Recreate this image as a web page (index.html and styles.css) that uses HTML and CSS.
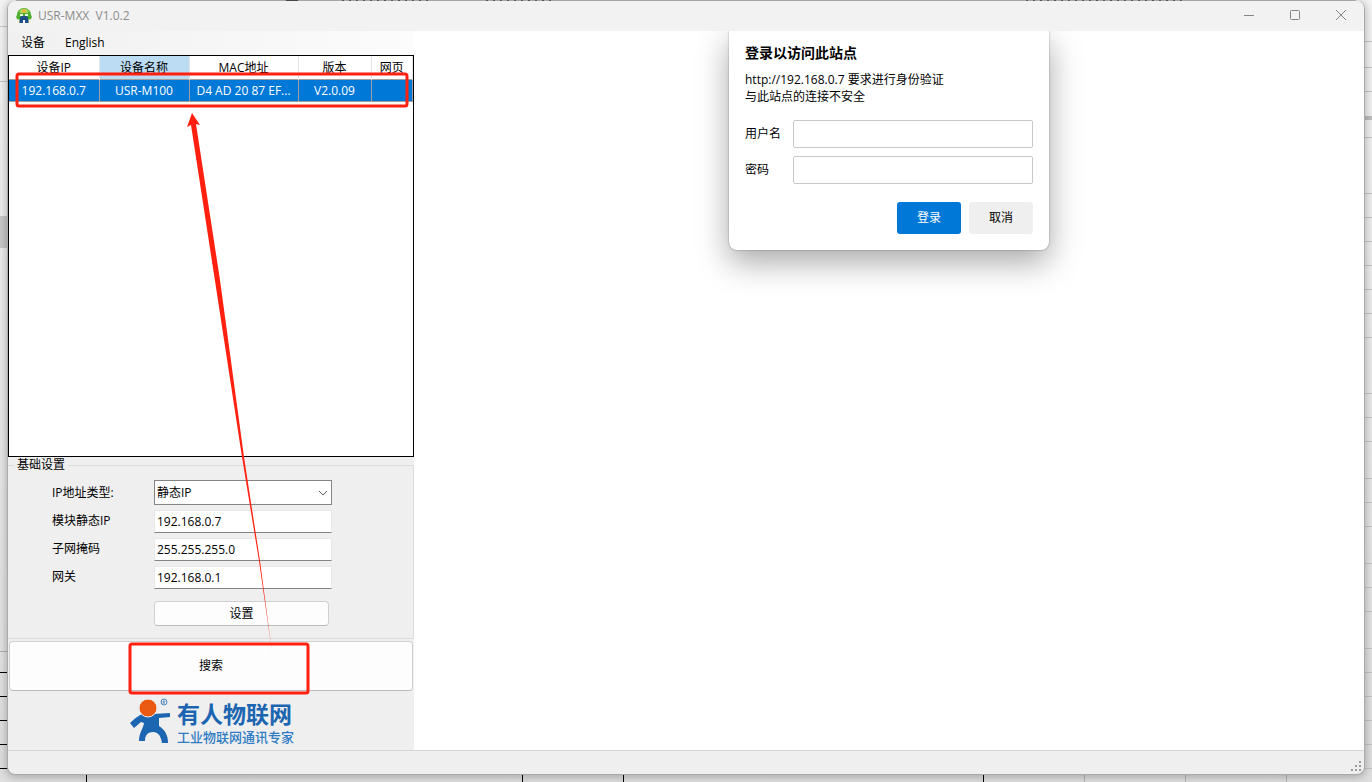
FILE: index.html
```html
<!DOCTYPE html>
<html lang="zh-CN">
<head>
    <meta charset="UTF-8">
    <title>USR-MXX V1.0.2</title>
    <link rel="stylesheet" href="styles.css">
</head>
<body>
    <div class="window">
        <header class="titlebar">
            <svg class="app-icon" viewBox="0 0 16 16">
                <path d="M8 0c4 0 7 3 7 7 1 1 1 3 0 4l-3 1H4l-3-1c-1-1-1-3 0-4 0-4 3-7 7-7z" fill="#4fae2c"/>
                <path d="M3 4a5.500 5.500 0 0 1 10 0l-2 1H5z" fill="#a8d95c"/>
                <circle cx="8" cy="3" r="2" fill="#e8b53c"/>
                <path d="M4 6h3v2H4zM9 6h3v2H9z" fill="#e6f5e0"/>
                <path d="M4 9l2-1h4l2 1v6H9v-3H7v3H4z" fill="#1d4f86"/>
                <path d="M3 12h1v3H3zM12 12h1v3h-1z" fill="#7f8f9c"/>
            </svg>
            <h1 class="title">USR-MXX&nbsp; V1.0.2</h1>
            <div class="controls">
                <button class="control" aria-label="Minimize">
                    <svg viewBox="0 0 10 10"><path d="M0 5.5h10"/></svg>
                </button>
                <button class="control" aria-label="Maximize">
                    <svg viewBox="0 0 10 10"><rect x=".5" y=".5" width="9" height="9" rx="1"/></svg>
                </button>
                <button class="control" aria-label="Close">
                    <svg viewBox="0 0 10 10"><path d="M0 0l10 10M10 0L0 10"/></svg>
                </button>
            </div>
        </header>

        <div class="main">
            <div class="sidebar">
                <nav class="menu">
                    <button>设备</button>
                    <button>English</button>
                </nav>

                <div class="device-list">
                    <table>
                        <colgroup>
                            <col class="col-ip">
                            <col class="col-name">
                            <col class="col-mac">
                            <col class="col-version">
                            <col class="col-web">
                        </colgroup>
                        <thead>
                            <tr>
                                <th>设备IP</th>
                                <th class="sorted">设备名称</th>
                                <th>MAC地址</th>
                                <th>版本</th>
                                <th>网页</th>
                            </tr>
                        </thead>
                        <tbody>
                            <tr>
                                <td>192.168.0.7</td>
                                <td>USR-M100</td>
                                <td>D4 AD 20 87 EF...</td>
                                <td>V2.0.09</td>
                                <td></td>
                            </tr>
                        </tbody>
                    </table>
                </div>

                <fieldset class="settings">
                    <legend>基础设置</legend>
                    <div class="form">
                        <label for="ip-type">IP地址类型:</label>
                        <div class="select-box">
                            <select id="ip-type">
                                <option>静态IP</option>
                            </select>
                            <svg class="chevron" viewBox="0 0 10 6"><path d="M1 1l4 4 4-4"/></svg>
                        </div>
                        <label for="static-ip">模块静态IP</label>
                        <input id="static-ip" type="text" value="192.168.0.7">
                        <label for="mask">子网掩码</label>
                        <input id="mask" type="text" value="255.255.255.0">
                        <label for="gateway">网关</label>
                        <input id="gateway" type="text" value="192.168.0.1">
                        <button class="btn set-btn">设置</button>
                    </div>
                </fieldset>

                <button class="btn search-btn">搜索</button>

                <div class="brand">
                    <svg class="brand-mark" viewBox="0 0 40 46">
                        <path d="M12 16C8 18 4 21 0 25l4 5 7-6 3 1c-1 6-5 10-5 18h6c0-6 3-9 8-9 6 0 8 5 9 11h6c0-8-3-13-9-17v-8l11-1v-4l-17 1z" fill="#1b65b1"/>
                        <circle cx="18" cy="10" r="9" fill="#ea5a13" stroke="#efefef"/>
                        <circle cx="34" cy="4" r="3" fill="none" stroke="#4a86c2"/>
                        <path d="M33 6V3h2v1h-2l2 2" fill="none" stroke="#4a86c2" stroke-width=".7"/>
                    </svg>
                    <div class="brand-text">
                        <div class="brand-name">有人物联网</div>
                        <div class="brand-slogan">工业物联网通讯专家</div>
                    </div>
                </div>

                <svg class="marks" viewBox="0 0 406 720">
                    <rect x="9" y="43" width="390" height="32" rx="2"/>
                    <rect x="122" y="613" width="178" height="49" rx="2"/>
                    <path class="arrow" d="M184 82l8 12-4-1 24 156 24 177 16 104 12 91-13-91-17-104-27-176-24-156-4 2z"/>
                </svg>
            </div>

            <main class="browser">
                <form class="login">
                    <h2>登录以访问此站点</h2>
                    <p>http://192.168.0.7 要求进行身份验证<br>与此站点的连接不安全</p>
                    <div class="login-row">
                        <label for="user">用户名</label>
                        <input id="user" type="text">
                    </div>
                    <div class="login-row">
                        <label for="password">密码</label>
                        <input id="password" type="password">
                    </div>
                    <div class="login-actions">
                        <button type="button" class="primary">登录</button>
                        <button type="button">取消</button>
                    </div>
                </form>
            </main>
        </div>

        <footer class="statusbar">
            <svg class="grip" viewBox="0 0 10 10">
                <path d="M8 0h2v2H8zM4 4h2v2H4zM8 4h2v2H8zM0 8h2v2H0zM4 8h2v2H4zM8 8h2v2H8z"/>
            </svg>
        </footer>
    </div>
</body>
</html>
```
FILE: styles.css
```css
:root {
    --panel: #efefef;
    --blue: #0078d7;
    --mark: #ff2010;
    --line: #d5d5d5;
    --rows: repeating-linear-gradient(#c4c4c8 0 1px, transparent 1px 24px);
}

* {
    box-sizing: border-box;
}

body {
    margin: 0;
    height: 100vh;
    padding: 1px 7px 7px;
    display: flex;
    font-family: "Open Sans", "Noto Sans CJK SC", sans-serif;
    font-size: 12px;
    line-height: 16px;
    color: #000;
    /* sheet behind the window: left, right, bottom and top edges */
    background:
        linear-gradient(#c8c8c8, #c8c8c8) 0 216px / 8px 32px no-repeat,
        linear-gradient(#c8c8c8, #c8c8c8) 0 26px / 8px 1px no-repeat,
        linear-gradient(#c8c8c8, #c8c8c8) 0 81px / 8px 1px no-repeat,
        linear-gradient(#b0b0b0, #b0b0b0) 0 651px / 8px 1px no-repeat,
        repeating-linear-gradient(#000 0 1px, transparent 1px 24px) 0 672px / 8px 110px no-repeat,
        linear-gradient(#bdbdbd, #bdbdbd) 100% 116px / 8px 4px no-repeat,
        linear-gradient(#c4c4c8, #c4c4c8) 100% 41px / 8px 1px no-repeat,
        var(--rows) 100% 67px / 8px 25px no-repeat,
        linear-gradient(#c4c4c8, #c4c4c8) 100% 137px / 8px 1px no-repeat,
        var(--rows) 100% 193px / 8px 145px no-repeat,
        var(--rows) 100% 393px / 8px 49px no-repeat,
        var(--rows) 100% 478px / 8px 49px no-repeat,
        var(--rows) 100% 563px / 8px 49px no-repeat,
        var(--rows) 100% 648px / 8px 121px no-repeat,
        linear-gradient(#000, #000) 86px 100% / 1px 8px no-repeat,
        linear-gradient(#000, #000) 522px 100% / 1px 8px no-repeat,
        linear-gradient(#000, #000) 623px 100% / 1px 8px no-repeat,
        linear-gradient(#000, #000) 983px 100% / 1px 8px no-repeat,
        linear-gradient(#b4b4b4, #b4b4b4) 1084px 100% / 1px 8px no-repeat,
        linear-gradient(#b4b4b4, #b4b4b4) 1185px 100% / 1px 8px no-repeat,
        linear-gradient(#b4b4b4, #b4b4b4) 1286px 100% / 1px 8px no-repeat,
        linear-gradient(#505050, #505050) 286px 0 / 12px 1px no-repeat,
        repeating-linear-gradient(to right, #606060 0 2px, transparent 2px 7px) 342px 0 / 90px 1px no-repeat,
        repeating-linear-gradient(to right, #606060 0 2px, transparent 2px 7px) 486px 0 / 70px 1px no-repeat,
        repeating-linear-gradient(to right, #606060 0 2px, transparent 2px 7px) 1026px 0 / 160px 1px no-repeat,
        linear-gradient(#bbb, #bbb) 16px 0 / calc(100% - 32px) 1px no-repeat,
        linear-gradient(#f4f4f4, #dedede);
}

button, input, select {
    font: inherit;
    color: inherit;
}

.window {
    flex: 1;
    display: flex;
    flex-direction: column;
    border: 1px solid #aaa;
    border-top: 0;
    border-radius: 8px;
    background: var(--panel);
    box-shadow: 0 1px 10px rgba(0, 0, 0, 0.3);
    overflow: hidden;
}

.titlebar {
    height: 30px;
    padding-left: 8px;
    display: flex;
    align-items: center;
    background: #f2f2f2;
}

.app-icon {
    width: 16px;
    height: 16px;
}

.title {
    margin: 0 0 0 6px;
    font-size: 12px;
    font-weight: normal;
    color: #8c8c8c;
}

.controls {
    margin-left: auto;
    display: flex;
}

.control {
    width: 46px;
    height: 30px;
    padding: 0;
    border: 0;
    background: none;
}

.control svg {
    width: 10px;
    height: 10px;
    fill: none;
    stroke: #858585;
}

.main {
    flex: 1;
    display: flex;
}

.sidebar {
    position: relative;
    width: 406px;
    display: flex;
    flex-direction: column;
}

.menu {
    height: 24px;
    padding-left: 13px;
    display: flex;
    gap: 20px;
    background: linear-gradient(to right, #f0f0f0, #fcfcfc);
}

.menu button {
    padding: 0;
    border: 0;
    background: none;
}

.device-list {
    height: 402px;
    border: 1px solid #000;
    background: #fff;
}

.device-list table {
    width: 100%;
    table-layout: fixed;
    border-collapse: collapse;
}

.col-ip, .col-name {
    width: 90px;
}

.col-mac {
    width: 109px;
}

.col-version {
    width: 73px;
}

.device-list th {
    height: 23px;
    padding: 2px 0 0;
    font-weight: normal;
    border-right: 1px solid #e3e3e3;
}

.device-list th.sorted {
    background: #bcdcf4;
}

.device-list td {
    height: 22px;
    padding: 2px 2px 0;
    color: #fff;
    background: var(--blue);
    border: 1px solid #a0a0a0;
    border-left: 0;
    text-align: center;
    white-space: nowrap;
}

.settings {
    margin: 1px 0 2px;
    padding: 8px 0 12px;
    border: 1px solid #dcdcdc;
    border-left: 0;
}

.settings legend {
    margin-left: 6px;
    padding: 0 3px;
    line-height: 14px;
}

.form {
    padding-left: 44px;
    display: grid;
    grid-template-columns: 102px 178px;
    row-gap: 4px;
    align-items: center;
}

.form label {
    line-height: 24px;
}

.form input {
    height: 23px;
    padding: 0 2px;
    border: 1px solid #e8e8e8;
    border-bottom-color: #858585;
    background: #fff;
}

.select-box {
    position: relative;
}

.select-box select {
    display: block;
    width: 100%;
    height: 25px;
    padding: 0 2px;
    border: 1px solid #858585;
    border-radius: 0;
    background: #fff;
    appearance: none;
}

.chevron {
    position: absolute;
    right: 4px;
    top: 10px;
    width: 10px;
    height: 6px;
    fill: none;
    stroke: #606060;
}

.btn {
    padding: 0;
    border: 1px solid #d0d0d0;
    border-bottom-color: #bcbcbc;
    border-radius: 4px;
    background: #fdfdfd;
}

.set-btn {
    grid-column: 2;
    width: 175px;
    height: 25px;
    margin-top: 8px;
}

.search-btn {
    height: 50px;
    margin: 0 1px;
}

.brand {
    padding: 7px 0 0 122px;
    display: flex;
    gap: 7px;
}

.brand-mark {
    width: 40px;
    height: 46px;
}

.brand-text {
    font-family: "Liberation Sans", "Noto Sans CJK SC", sans-serif;
}

.brand-name {
    padding-top: 5px;
    font-size: 23px;
    line-height: 25px;
    font-weight: bold;
    color: #1b65b1;
}

.brand-slogan {
    font-size: 13px;
    line-height: 20px;
    font-weight: 500;
    color: #2f7cc4;
}

/* red callouts over the list and the search button */
.marks {
    position: absolute;
    top: 0;
    left: 0;
    width: 406px;
    height: 720px;
    fill: none;
    stroke: var(--mark);
    stroke-width: 3;
    pointer-events: none;
}

.marks .arrow {
    fill: var(--mark);
    stroke: none;
}

.browser {
    flex: 1;
    background: #fff;
    overflow: hidden;
}

.login {
    width: 320px;
    margin: 0 auto;
    padding: 13px 16px 16px;
    border-radius: 0 0 8px 8px;
    background: #fff;
    box-shadow: 0 0 2px rgba(0, 0, 0, 0.4), 0 12px 32px rgba(0, 0, 0, 0.35);
}

.login h2 {
    margin: 0 0 10px;
    font-size: 14px;
    line-height: 17px;
}

.login p {
    margin: 0 0 15px;
    line-height: 17px;
}

.login-row {
    margin-bottom: 8px;
    display: flex;
    align-items: center;
}

.login-row label {
    width: 48px;
}

.login-row input {
    flex: 1;
    min-width: 0;
    height: 28px;
    border: 1px solid #c8c8c8;
    border-radius: 2px;
}

.login-actions {
    margin-top: 18px;
    display: flex;
    justify-content: flex-end;
    gap: 8px;
}

.login-actions button {
    width: 64px;
    height: 32px;
    border: 0;
    border-radius: 3px;
    background: #efefef;
}

.login-actions .primary {
    color: #fff;
    background: var(--blue);
}

.statusbar {
    flex-shrink: 0;
    height: 24px;
    padding: 0 3px 3px 0;
    display: flex;
    justify-content: flex-end;
    align-items: flex-end;
    border-top: 1px solid var(--line);
}

.grip {
    width: 10px;
    height: 10px;
    fill: #9a9a9a;
}
```
